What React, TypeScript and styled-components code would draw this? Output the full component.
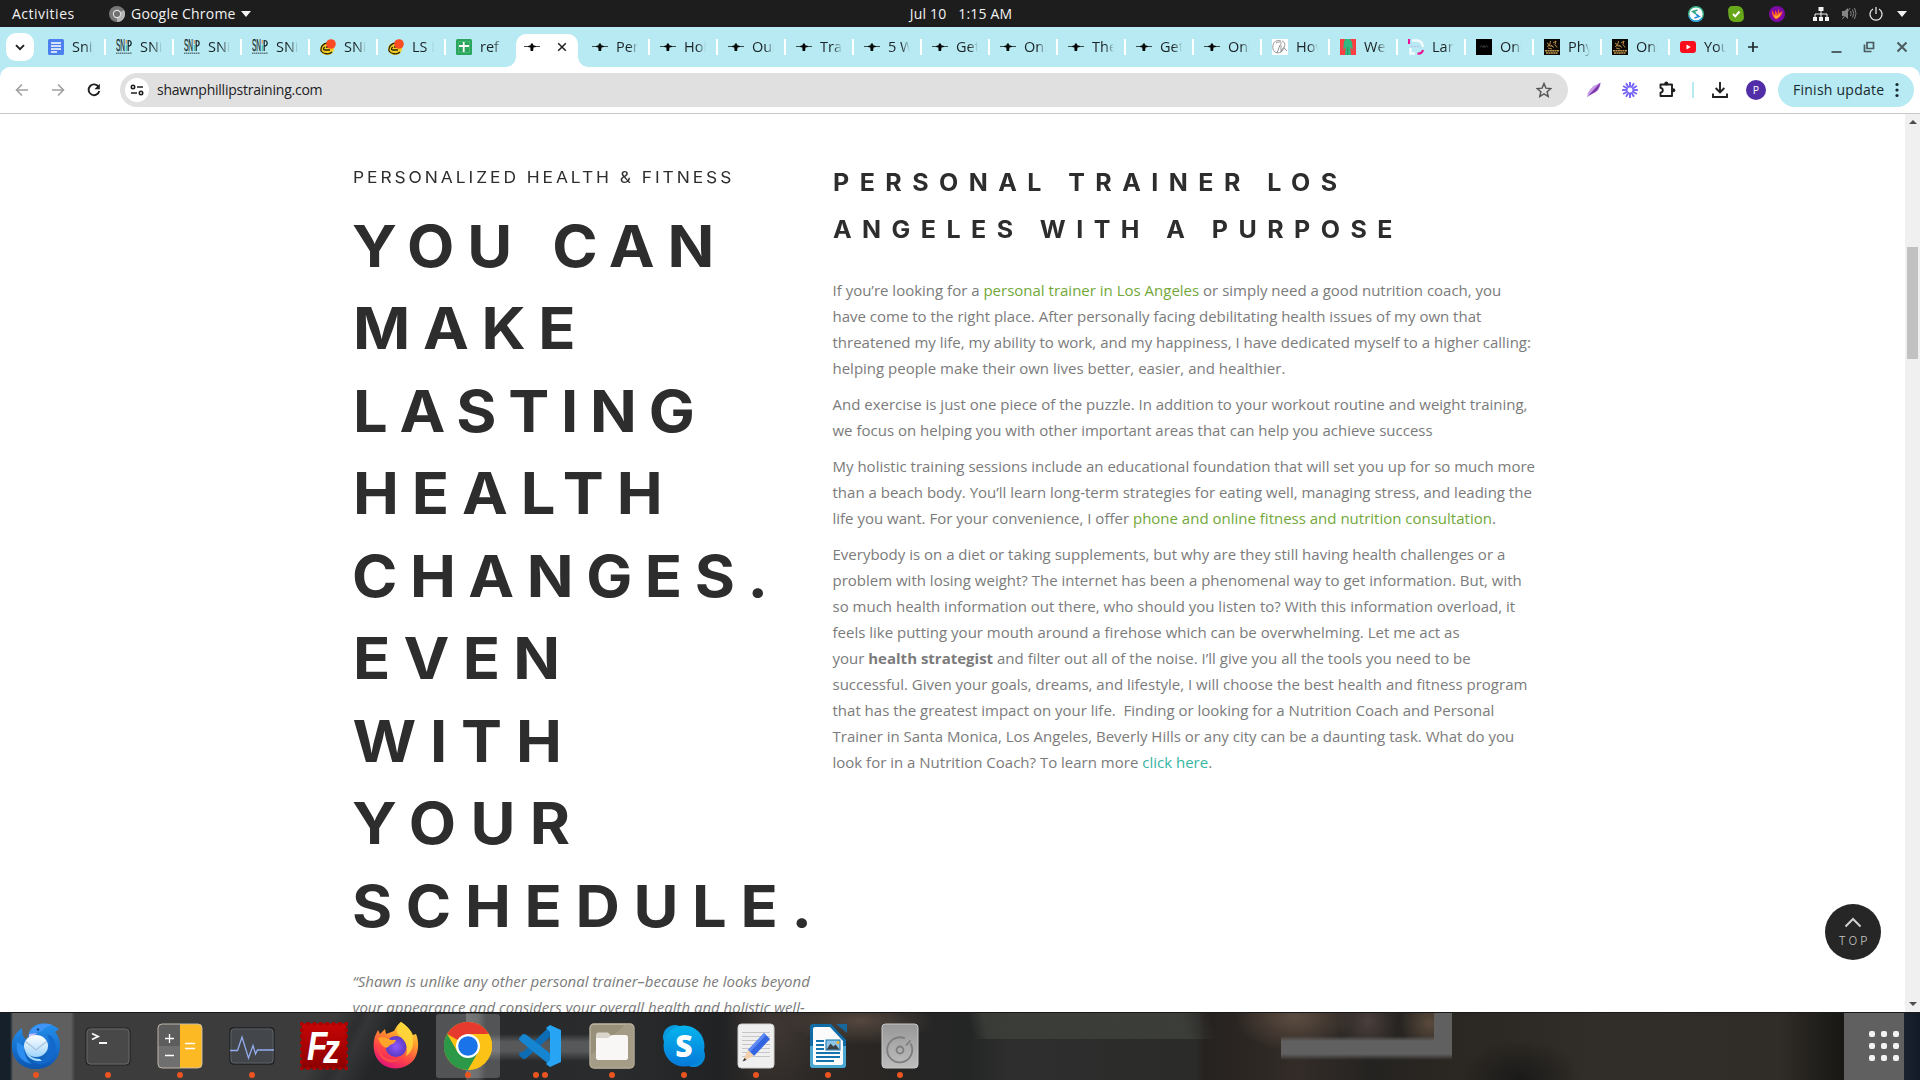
import React from "react";
import styled, { createGlobalStyle, css } from "styled-components";

const uiFont = `"Open Sans", "Noto Sans", sans-serif`;
const displayFont = `Inter, "Liberation Sans", sans-serif`;

const Global = createGlobalStyle`
  * { box-sizing: border-box; }
  html, body { margin: 0; padding: 0; overflow: hidden; background: #fff; }
  svg { display: block; flex: none; }
`;

const Desktop = styled.div`
  width: 1920px;
  height: 1080px;
  display: flex;
  flex-direction: column;
  overflow: hidden;
  font-family: ${uiFont};
`;

/* ---------- system top bar ---------- */

const SystemBar = styled.header`
  height: 27px;
  flex: none;
  display: grid;
  grid-template-columns: 1fr auto 1fr;
  align-items: center;
  padding: 0 13px 0 12px;
  background: #1d1d1d;
  color: #f2f2f2;
  font-size: 14px;
  line-height: 26px;
  white-space: pre;
`;

const SystemLeft = styled.div`
  display: flex;
  align-items: center;
`;

const Activities = styled.span`
  width: 97px;
  letter-spacing: 0.5px;
`;

const AppMenu = styled.span`
  margin-left: 6px;
  margin-right: 5px;
  letter-spacing: 0.2px;
`;

const Clock = styled.div`
  display: flex;
  gap: 12px;
  padding-left: 3px;
  letter-spacing: 0.15px;
`;

const Tray = styled.div`
  display: flex;
  justify-content: flex-end;
  align-items: center;
`;

const TraySlot = styled.span<{ $w: number }>`
  width: ${(p) => p.$w}px;
  display: flex;
  justify-content: center;
`;

/* ---------- browser tab strip ---------- */

const TabStrip = styled.nav`
  height: 40px;
  flex: none;
  display: flex;
  align-items: flex-start;
  padding-left: 6px;
  background: #b7eaf2;
`;

const TabSearch = styled.button`
  width: 28px;
  height: 28px;
  margin: 6px 4px 0 0;
  padding: 0;
  border: 0;
  border-radius: 10px;
  background: #fff;
  display: grid;
  place-items: center;
`;

const TabBox = styled.div<{ $active?: boolean; $divider?: boolean }>`
  position: relative;
  width: 68px;
  height: 40px;
  flex: none;
  display: flex;
  align-items: center;
  padding-left: 10px;
  padding-top: 0;

  ${(p) =>
    p.$divider &&
    css`
      &::after {
        content: "";
        width: 2px;
        height: 16px;
        margin-left: auto;
        background: #fff;
      }
    `}

  ${(p) =>
    p.$active &&
    css`
      height: 33px;
      width: 62px;
      margin: 7px 4px 0 2px;
      padding-left: 8px;
      padding-bottom: 7px;
      background: #fff;
      border-radius: 10px 10px 0 0;
      &::before,
      &::after {
        content: "";
        position: absolute;
        bottom: 0;
        width: 10px;
        height: 10px;
      }
      &::before {
        left: -10px;
        background: radial-gradient(circle at 0 0, transparent 9.5px, #fff 10px);
      }
      &::after {
        right: -10px;
        background: radial-gradient(circle at 100% 0, transparent 9.5px, #fff 10px);
      }
    `}
`;

const TabTitle = styled.span`
  width: 22px;
  margin-left: 8px;
  overflow: hidden;
  white-space: nowrap;
  font-size: 14.5px;
  line-height: 20px;
  color: #1b2326;
  mask-image: linear-gradient(90deg, #000 60%, transparent 100%);
`;

const TabClose = styled.span`
  margin-left: 17px;
`;

const NewTab = styled.span`
  margin: 14px 0 0 9px;
`;

const WindowControls = styled.div`
  margin-left: auto;
  height: 40px;
  display: flex;
  align-items: center;
  gap: 21px;
  padding-right: 12px;
`;

/* ---------- browser toolbar ---------- */

const ToolbarBack = styled.div`
  height: 47px;
  flex: none;
  background: linear-gradient(#b7eaf2 12px, #fff 12px);
`;

const Toolbar = styled.div`
  height: 47px;
  display: flex;
  align-items: center;
  padding: 0 6px 1px 14px;
  background: #fff;
  border-bottom: 1px solid #c8c9c9;
  border-radius: 10px 10px 0 0;
`;

const NavButtons = styled.div`
  display: flex;
  gap: 20px;
  width: 106px;
`;

const AddressBar = styled.div`
  width: 1448px;
  height: 34px;
  display: flex;
  align-items: center;
  padding: 0 16px 0 5px;
  border-radius: 17px;
  background: #e0e0e0;
`;

const SiteInfo = styled.span`
  width: 24px;
  height: 24px;
  border-radius: 50%;
  background: #fff;
  display: grid;
  place-items: center;
`;

const Url = styled.span`
  flex: 1;
  margin-left: 8px;
  font-size: 14px;
  letter-spacing: -0.23px;
  color: #202124;
`;

const Extensions = styled.div`
  display: flex;
  align-items: center;
  margin-left: 18px;
`;

const ExtensionSlot = styled.span<{ $w: number }>`
  width: ${(p) => p.$w}px;
  display: flex;
`;

const ToolbarRule = styled.i`
  width: 2px;
  height: 16px;
  background: #b7eaf2;
`;

const Avatar = styled.span`
  width: 20px;
  height: 20px;
  border-radius: 50%;
  background: #512da8;
  color: #fff;
  font-size: 10.5px;
  line-height: 20px;
  text-align: center;
`;

const UpdateButton = styled.button`
  margin-left: auto;
  width: 136px;
  height: 34px;
  border: 0;
  border-radius: 17px;
  background: #b7eaf2;
  display: flex;
  align-items: center;
  justify-content: space-between;
  padding: 0 15px;
  font: 14px ${uiFont};
  letter-spacing: 0.25px;
  color: #17292e;
`;

/* ---------- page ---------- */

const Viewport = styled.div`
  position: relative;
  height: 898px;
  flex: none;
  display: flex;
  background: #fff;
  overflow: hidden;
`;

const Page = styled.main`
  flex: 1;
  display: flex;
  padding-left: 352.5px;
  overflow: hidden;
`;

const LeftColumn = styled.section`
  width: 480px;
  flex: none;
  padding-top: 49px;
`;

const Eyebrow = styled.h4`
  margin: 0 0 13.5px;
  font: 400 16.4px/28px ${displayFont};
  letter-spacing: 2.77px;
  color: #2d2d2d;
  white-space: nowrap;
  transform: scaleX(1.06);
  transform-origin: 0 0;
`;

const Headline = styled.h1`
  margin: 0 0 20.5px;
  font: 700 58px/82.5px ${displayFont};
  color: #2d2d2d;
  transform: scaleX(1.06);
  transform-origin: 0 0;
`;

const HeadlineRow = styled.span<{ $spacing: number; $shift?: number }>`
  display: block;
  white-space: nowrap;
  letter-spacing: ${(p) => p.$spacing}px;
  text-indent: ${(p) => p.$shift ?? 0}px;
`;

const Quote = styled.p`
  margin: 0;
  font-size: 15px;
  line-height: 26px;
  font-style: italic;
  color: #7b7b7b;
  white-space: nowrap;
`;

const RightColumn = styled.section`
  width: 730px;
  flex: none;
  padding-top: 45px;
`;

const Subhead = styled.h2`
  margin: 0 0 24px;
  font: 700 23.6px/47px ${displayFont};
  letter-spacing: 9.85px;
  color: #2d2d2d;
  white-space: nowrap;
  transform: scaleX(1.06);
  transform-origin: 0 0;
`;

const Paragraph = styled.p`
  margin: 0 0 10px;
  font-size: 15px;
  line-height: 26px;
  color: #7b7b7b;
  white-space: nowrap;
`;

const TextLink = styled.a<{ $teal?: boolean }>`
  color: ${(p) => (p.$teal ? "#36b5a2" : "#72a83a")};
`;

const Scrollbar = styled.aside`
  width: 15px;
  flex: none;
  display: flex;
  flex-direction: column;
  align-items: center;
  padding: 6px 0;
  background: #f0f0f0;
`;

const ScrollThumb = styled.div`
  width: 11px;
  height: 112px;
  margin: 123px 0 auto;
  background: #c1c1c1;
`;

const ScrollArrow = styled.i<{ $down?: boolean }>`
  width: 0;
  height: 0;
  border: solid transparent;
  border-width: 0 4px 4px;
  border-bottom-color: #4d4d4d;
  transform: ${(p) => (p.$down ? "rotate(180deg)" : "none")};
`;

const TopButton = styled.a`
  position: absolute;
  left: 1825px;
  top: 790px;
  width: 56px;
  height: 56px;
  border-radius: 50%;
  background: #262626;
  display: flex;
  flex-direction: column;
  align-items: center;
  padding-top: 13px;
  color: #c4c4c4;
`;

const TopLabel = styled.span`
  margin: 6px 0 0 3px;
  font: 300 11.5px/14px ${displayFont};
  letter-spacing: 3.1px;
`;

/* ---------- dock ---------- */

const Dock = styled.footer`
  height: 68px;
  flex: none;
  display: flex;
  border-top: 1px solid #191919;
  background:
    linear-gradient(#606060, #606060) 1844px 0 / 60px 68px no-repeat,
    linear-gradient(90deg, #19212f, #131a27) 1904px 0 / 16px 68px no-repeat,
    linear-gradient(transparent, #606060 5px, #606060 18px, transparent) 1281px 23px / 171px 24px no-repeat,
    linear-gradient(#606060, #606060) 1434px 0 / 18px 30px no-repeat,
    linear-gradient(90deg, #555759, #4b4c4d 60%, transparent) 466px 0 / 20px 68px no-repeat,
    linear-gradient(transparent, #575859 8px, #575859 17px, transparent) 480px 21px / 132px 27px no-repeat,
    linear-gradient(90deg, #15202b 10px, #5f5f5f 13px, #5f5f5f 71px, #3c3c3c 75px) 0 0 / 300px 68px no-repeat,
    linear-gradient(118deg, #3c3c3c 22%, #2c2e2f 36%, #343536 42%, #242628 58%) 300px 0 / 136px 68px no-repeat,
    radial-gradient(ellipse 60px 34px at 1295px 4px, #5c4c40, transparent) 0 0 / 1434px 68px no-repeat,
    radial-gradient(ellipse 30px 36px at 1368px 8px, #4a3f3c, transparent) 0 0 / 1434px 68px no-repeat,
    radial-gradient(ellipse 30px 30px at 1430px 10px, #5a4a3c, transparent) 0 0 / 1434px 68px no-repeat,
    radial-gradient(ellipse 75px 24px at 860px 8px, #54473f, transparent),
    radial-gradient(ellipse 50px 60px at 775px 15px, #3f3733, transparent),
    linear-gradient(75deg, transparent 4px, rgba(70, 73, 66, 0.55) 18px, rgba(70, 73, 66, 0.6) 210px, transparent 238px) 970px 0 / 250px 26px no-repeat,
    radial-gradient(ellipse 60px 40px at 1520px 66px, #1a1a19, transparent),
    linear-gradient(90deg, #242628 0, #292b2c 620px, #202224 720px, #302c29 760px, #292623 870px,
      #262626 930px, #242525 970px, #2d2e2d 1010px, #2b2b2a 1195px, #26221f 1205px, #332c28 1300px,
      #252321 1370px, #2b2722 1460px, #312d28 1600px, #302c27 1780px, #191815 1840px);
`;

const DockItem = styled.div`
  width: 72px;
  height: 67px;
  display: flex;
  justify-content: center;
  padding-top: 1px;
`;

const DockTile = styled.div<{ $focused?: boolean }>`
  width: 64px;
  height: 64px;
  display: flex;
  flex-direction: column;
  align-items: center;
  padding-top: 8px;
  border-radius: 3px;
  background: ${(p) => (p.$focused ? "rgba(255,255,255,0.2)" : "transparent")};
`;

const RunningDots = styled.div`
  display: flex;
  gap: 3px;
  margin-top: 2px;
`;

const RunningDot = styled.i`
  width: 6px;
  height: 6px;
  border-radius: 50%;
  background: #e95420;
`;

const AppGrid = styled.div`
  margin: 18px 19px 0 auto;
  width: 32px;
  height: 32px;
  display: grid;
  grid-template-columns: repeat(3, 6px);
  grid-auto-rows: 6px;
  gap: 6px;
`;

const AppGridDot = styled.i`
  border-radius: 2px;
  background: #f2f2f2;
`;

/* ---------- favicons ---------- */

type Fav = "docs" | "snip" | "ls" | "sheets" | "plane" | "script" | "body" | "ring" | "black" | "gold" | "tube";

function Favicon({ kind }: { kind: Fav }) {
  return (
    <svg width="16" height="16" viewBox="0 0 16 16">
      {kind === "docs" && (
        <>
          <rect width="16" height="16" rx="1.5" fill="#4b80ee" />
          <path d="M3 4h10M3 7h10M3 10h10M3 13h6" stroke="#fff" strokeWidth="1.5" />
        </>
      )}
      {kind === "snip" && (
        <>
          <text x="0" y="12" fontSize="16.500" fontWeight="400" textLength="9" lengthAdjust="spacingAndGlyphs" fontFamily="Liberation Sans" stroke="#18282c" strokeWidth=".3" fill="#18282c">SN</text>
          <path d="M10.300 1v4" stroke="#e08a3c" />
          <path d="M10.300 6v6" stroke="#3fbf9c" />
          <path d="M12.200 12V1.500q3 0 3 2.800t-3 2.900" fill="none" stroke="#18282c" strokeWidth="1.200" />
          <path d="M0 14.300h16" stroke="#5c7a80" strokeWidth="1.500" strokeDasharray="1.500 .5" />
        </>
      )}
      {kind === "ls" && (
        <>
          <ellipse cx="7" cy="9.700" rx="7" ry="6.300" fill="#f5d020" />
          <path d="M8 4C3 4 .5 8 1 12c2 3 8 4 11 1M5 8c-2 1-2 3 0 3h5M6 8h4" fill="none" stroke="#2a2413" strokeWidth="1.300" />
          <circle cx="11" cy="5" r="4.800" fill="#fb4b22" />
        </>
      )}
      {kind === "sheets" && (
        <>
          <rect width="16" height="16" rx="1.500" fill="#29a65b" />
          <path d="M3 7h10M7.700 3v10" stroke="#fff" strokeWidth="1.800" />
          <path d="M2.500 2.500h11v11h-11z" fill="none" stroke="#5cc287" strokeWidth=".6" />
        </>
      )}
      {kind === "plane" && (
        <>
          <path d="M0 7.500h16" stroke="#3c484c" strokeWidth="1" />
          <path d="M4 7l2.500-.8L7 4.500h1.800l.5 1.700 2.700.8v1l-2.500.6-.4 3.400H6.600l-.3-3.400L4 8z" fill="#050708" />
        </>
      )}
      {kind === "script" && (
        <>
          <rect width="16" height="16" fill="#fff" />
          <path d="M9 2C3 0 0 5 1 10c1 5 8 5 10 1s3-8-1-9M4 4c4-2 7-1 4 2l-3 8M9 6v7c2-5 3-5 4-3l2 2" fill="none" stroke="#8b8d8e" strokeWidth=".9" />
        </>
      )}
      {kind === "body" && (
        <>
          <rect width="16" height="16" fill="#fb3f43" />
          <path d="M5 0h5l2 3 .8 8-2.600-3L11 16H5l.7-8-2.500 3L4 3z" fill="#2fb980" />
          <path d="M7.700 8v8" stroke="#1b8d62" strokeWidth=".7" />
        </>
      )}
      {kind === "ring" && (
        <>
          <path d="M4 1.500h5.500a5.500 5.500 0 0 1 5 6.500M2.500 9v5.500H7" fill="none" stroke="#f3fbfd" strokeWidth="2.500" />
          <path d="M1 0v5M9.500 14.500Q14 15 15 11" fill="none" stroke="#ec1199" strokeWidth="2.200" />
          <path d="M3 7.500h10" stroke="#b9c6e6" strokeWidth="1.500" strokeDasharray="2 1" />
        </>
      )}
      {kind === "black" && (
        <>
          <rect width="16" height="16" fill="#000" />
          <path d="M4 8.500l1.500-2L7 8.500l1-2 1 2 1.500-2 1.500 2" fill="none" stroke="#4e4e4e" strokeWidth=".7" />
        </>
      )}
      {kind === "gold" && (
        <>
          <rect width="16" height="16" fill="#0b0906" />
          <path d="M3 4l2 1.500L3.500 8M6.500 2l-1 5h3M9 4l3-2-1 3.500 2 3M7 6l3 2.500M4 9l4 1" fill="none" stroke="#b98d47" strokeWidth="1" />
          <path d="M1 11.700h14M2 14h12" stroke="#c49a50" strokeWidth="1.400" strokeDasharray="2 .4" />
        </>
      )}
      {kind === "tube" && (
        <>
          <rect y="2" width="16" height="12" rx="3" fill="#fb0d1b" />
          <path d="M6.500 5.500v5L10.800 8z" fill="#fff" />
        </>
      )}
    </svg>
  );
}

const tabs: { kind: Fav; title: string; active?: boolean; plain?: boolean }[] = [
  { kind: "docs", title: "Snip" },
  { kind: "snip", title: "SNiP" },
  { kind: "snip", title: "SNiP" },
  { kind: "snip", title: "SNiP" },
  { kind: "ls", title: "SNiP" },
  { kind: "ls", title: "LS I" },
  { kind: "sheets", title: "ref", plain: true },
  { kind: "plane", title: "", active: true },
  { kind: "plane", title: "Pers" },
  { kind: "plane", title: "Holi" },
  { kind: "plane", title: "Our" },
  { kind: "plane", title: "Trai" },
  { kind: "plane", title: "5 W" },
  { kind: "plane", title: "Get" },
  { kind: "plane", title: "Onl" },
  { kind: "plane", title: "The" },
  { kind: "plane", title: "Get" },
  { kind: "plane", title: "Onl" },
  { kind: "script", title: "How" },
  { kind: "body", title: "Wel" },
  { kind: "ring", title: "Larr" },
  { kind: "black", title: "Onl" },
  { kind: "gold", title: "Phy" },
  { kind: "gold", title: "Onl" },
  { kind: "tube", title: "You" },
];

/* ---------- dock icons ---------- */

const Thunderbird = () => (
  <svg width="48" height="48" viewBox="0 0 48 48">
    <defs>
      <linearGradient id="tb" x1="0" y1="0" x2="0" y2="1"><stop stopColor="#2490ee" /><stop offset="1" stopColor="#0b55b0" /></linearGradient>
      <linearGradient id="tbm" x1="0" y1="0" x2="0" y2="1"><stop stopColor="#fff" /><stop offset="1" stopColor="#9fd4fb" /></linearGradient>
    </defs>
    <path d="M10 6C2 12-1 19 0 27c1 12 11 20 24 20s24-9 24-23c0-6-2-11-5-14l4-3C38 0 25-1 18 8l-3 9C11 17 10 12 10 6z" fill="url(#tb)" />
    <path d="M17 11c4-8 14-11 24-8-6 1-9 3-11 6l-12 3z" fill="#3f95f5" />
    <path d="M17 12l9-1-9 5z" fill="#cbb9fb" />
    <path d="M35 12c5 9 4 20-5 26l-9 2 8 3c9-2 15-8 15-17 0-7-4-12-9-14z" fill="#1368cc" />
    <path d="M5 20c-2 12 4 20 15 22-6-4-8-10-8-18z" fill="#2c8df0" />
    <ellipse cx="24" cy="24" rx="12" ry="11" fill="url(#tbm)" />
    <path d="M13.500 19.500L24 28l10.500-8.500" fill="none" stroke="#a9c4d8" strokeWidth="1.300" />
    <path d="M13 28q5 9 15 9l2 2q-14 1-17-11z" fill="#a8dcfd" />
    <circle cx="26" cy="7.500" r="1.200" fill="#123d83" />
  </svg>
);

const Terminal = () => (
  <svg width="48" height="48" viewBox="0 0 48 48">
    <rect x="2" y="6" width="44" height="37" rx="4" fill="#484848" stroke="#202020" strokeWidth="1.200" />
    <rect x="3" y="7" width="42" height="35" rx="3.500" fill="none" stroke="#686868" />
    <path d="M8 11.500l6 3-6 3M15 21h8" fill="none" stroke="#f5f5f5" strokeWidth="1.900" />
  </svg>
);

const Calculator = () => (
  <svg width="48" height="48" viewBox="0 0 48 48">
    <rect x="2" y="2" width="44" height="44" rx="4" fill="#5d5d5d" />
    <path d="M2 24h22v22H6a4 4 0 0 1-4-4z" fill="#6f6f6f" />
    <path d="M24 2h18a4 4 0 0 1 4 4v36a4 4 0 0 1-4 4H24z" fill="#fcb924" />
    <rect x="2" y="2" width="44" height="44" rx="4" fill="none" stroke="#c9c2b2" strokeWidth=".9" />
    <path d="M9 16.500h9M13.500 12v9M9 33.500h9M29 21.500h10M29 26.500h10" stroke="#fff" strokeWidth="1.300" />
  </svg>
);

const Monitor = () => (
  <svg width="48" height="48" viewBox="0 0 48 48">
    <rect x="2" y="6" width="44" height="36" rx="3" fill="#43474c" stroke="#1f2022" strokeWidth="1.300" />
    <rect x="3" y="7" width="42" height="34" rx="3" fill="none" stroke="#5d6064" />
    <path d="M2 28.500h7.500L14 15l6.500 21L25 23.500l2.500 8.500 2-4H46" fill="none" stroke="#93adee" strokeWidth="1.300" />
  </svg>
);

const FileZilla = () => (
  <svg width="48" height="48" viewBox="0 0 48 48">
    <defs><linearGradient id="fz" x1="0" y1="0" x2="0" y2="1"><stop stopColor="#c60505" /><stop offset="1" stopColor="#8c0000" /></linearGradient></defs>
    <rect x="1.500" y="1.500" width="45" height="45" fill="url(#fz)" />
    <rect x="1.500" y="1.500" width="45" height="45" fill="none" stroke="#a80202" strokeWidth="4" strokeLinecap="round" strokeDasharray="0 6.430" />
    <text x="7" y="37.500" fontFamily="Liberation Sans" fontStyle="italic" fontWeight="700" fontSize="41" textLength="33" lengthAdjust="spacingAndGlyphs" fill="#fff">F<tspan dx="-5" dy="3">z</tspan></text>
  </svg>
);

const Firefox = () => (
  <svg width="48" height="48" viewBox="0 0 48 48">
    <defs>
      <linearGradient id="ff" x1=".8" y1="0" x2=".3" y2="1"><stop stopColor="#ffe94a" /><stop offset=".35" stopColor="#ff9a2b" /><stop offset=".7" stopColor="#ff4447" /><stop offset="1" stopColor="#e0127c" /></linearGradient>
      <radialGradient id="ffg"><stop stopColor="#9059ff" /><stop offset="1" stopColor="#5b3ac0" /></radialGradient>
    </defs>
    <path d="M29 0c6 4 10 8 12 13l3-1c3 7 3 17-1 24-8 13-28 14-37 2C0 30 1 18 4 12l2-4 2 4 5-5 1 5 8-3c2-4 4-7 7-9z" fill="url(#ff)" />
    <circle cx="24" cy="24.500" r="10.500" fill="url(#ffg)" />
    <path d="M29 0c8 5 13 12 12 22-1 7-4 10-7 12 3-10-1-16-7-20-3-4-3-9 2-14z" fill="#ffd93b" opacity=".85" />
    <path d="M6 16c5-2 9 0 13 2h5c-1 4-5 4-7 6-3 4-8 0-11-8z" fill="#ffa329" />
    <path d="M6 23c1 12 12 18 23 13-9 9-24 3-23-13z" fill="#ff5b3a" opacity=".7" />
  </svg>
);

const Chrome = () => (
  <svg width="48" height="48" viewBox="0 0 48 48">
    <circle cx="24" cy="24" r="24" fill="#fcc215" />
    <path d="M24 24L3.200 12A24 24 0 0 1 44.800 12z" fill="#e53a2d" />
    <path d="M3.200 12A24 24 0 0 0 24 48l10.400-18L24 24 13.600 30z" fill="#2b9948" />
    <path d="M24 12h20.800A24 24 0 0 1 24 48l10.400-18z" fill="#fcc215" />
    <circle cx="24" cy="24" r="12" fill="#fff" />
    <circle cx="24" cy="24" r="9.800" fill="#1a73e8" />
  </svg>
);

const VsCode = () => (
  <svg width="48" height="48" viewBox="0 0 48 48">
    <path d="M34 4L8 29l-5 2v2l4 4 3-.5L34 15z" fill="#0e6cb5" />
    <path d="M3 16l4-4 3 .5L35 32v12L3 18z" fill="#1585d2" />
    <path d="M34 3l11 5v32l-11 5-4-3 4-4V10l-4-4z" fill="#27a5f4" />
  </svg>
);

const Files = () => (
  <svg width="48" height="48" viewBox="0 0 48 48">
    <rect x="2" y="2" width="44" height="44" rx="4" fill="#989079" stroke="#c1b9a5" strokeWidth="1.300" />
    <path d="M2 34L38 2h4a4 4 0 0 1 4 4v36a4 4 0 0 1-4 4H6a4 4 0 0 1-4-4z" fill="#aaa18d" opacity=".7" />
    <path d="M8 13a2.500 2.500 0 0 1 2.500-2.500H20l4 4v5H8z" fill="#d9d5cb" />
    <path d="M8 16h12l4-3h13.500a2.500 2.500 0 0 1 2.500 2.500v20a2.500 2.500 0 0 1-2.500 2.500h-27A2.500 2.500 0 0 1 8 35.500z" fill="#f8f7f5" />
  </svg>
);

const Skype = () => (
  <svg width="48" height="48" viewBox="0 0 48 48">
    <defs><linearGradient id="sk" x1="0" y1="0" x2="0" y2="1"><stop stopColor="#05b5ee" /><stop offset="1" stopColor="#0679da" /></linearGradient></defs>
    <circle cx="15" cy="15" r="12" fill="#0a9ade" />
    <circle cx="33.500" cy="33.500" r="11.500" fill="#0589d8" />
    <circle cx="24" cy="24" r="20.500" fill="url(#sk)" />
    <text x="24" y="35" textAnchor="middle" fontFamily="Open Sans" fontWeight="800" fontSize="30" fill="#fff">S</text>
  </svg>
);

const Gedit = () => (
  <svg width="48" height="48" viewBox="0 0 48 48">
    <rect x="6" y="2" width="36" height="44" rx="3.500" fill="#efefef" stroke="#cfcfcf" />
    <path d="M10 10.500h28M10 14.500h28M10 18.500h28M10 22.500h28M10 26.500h28M10 30.500h28M10 34.500h28" stroke="#c6c6c6" />
    <path d="M16 28L32 11l6 6-16 17z" fill="#3465e0" />
    <path d="M16 28L32 11l2 2-16 17z" fill="#5f8bf5" />
    <path d="M16 28l6 6-11 5z" fill="#f4cfab" />
    <path d="M12.500 36l2 2-4 1.500z" fill="#333" />
  </svg>
);

const Writer = () => (
  <svg width="48" height="48" viewBox="0 0 48 48">
    <path d="M9 2h18l15 16v25a3 3 0 0 1-3 3H9a3 3 0 0 1-3-3V5a3 3 0 0 1 3-3z" fill="#0f6ca6" />
    <path d="M6 24h36v19a3 3 0 0 1-3 3H9a3 3 0 0 1-3-3z" fill="#4ba8d3" />
    <path d="M32 2h11v9z" fill="#17669c" />
    <path d="M11 5h15l13 14v22a2 2 0 0 1-2 2H11a2 2 0 0 1-2-2V7a2 2 0 0 1 2-2z" fill="#fbfbfb" />
    <path d="M12 19h8M12 23h8M12 27h8M12 31h24M12 35h24M12 39h18" stroke="#1373ae" strokeWidth="1.900" />
    <rect x="22" y="18" width="14" height="10" fill="#8fc4e4" stroke="#1373ae" />
    <path d="M22.500 27.500l4-6 3 3 2-2 4 5z" fill="#3b4044" />
    <circle cx="34" cy="20.500" r="1.500" fill="#f4b62c" />
  </svg>
);

const Disks = () => (
  <svg width="48" height="48" viewBox="0 0 48 48">
    <defs><linearGradient id="dk" x1="0" y1="0" x2="0" y2="1"><stop stopColor="#989898" /><stop offset="1" stopColor="#bdbdbd" /></linearGradient></defs>
    <rect x="6" y="2" width="36" height="44" rx="3.500" fill="url(#dk)" stroke="#cacaca" />
    <path d="M34.500 21.500A12.500 12.500 0 1 1 29 16.500" fill="none" stroke="#7d7d7d" strokeWidth="1.800" />
    <path d="M30 23.500l4.500-5" stroke="#7d7d7d" strokeWidth="1.800" />
    <circle cx="24" cy="28" r="3.500" fill="none" stroke="#7d7d7d" strokeWidth="1.800" />
  </svg>
);

const dockItems: { Icon: React.FC; dots: number; focused?: boolean }[] = [
  { Icon: Thunderbird, dots: 1 },
  { Icon: Terminal, dots: 1 },
  { Icon: Calculator, dots: 1 },
  { Icon: Monitor, dots: 1 },
  { Icon: FileZilla, dots: 0 },
  { Icon: Firefox, dots: 0 },
  { Icon: Chrome, dots: 1, focused: true },
  { Icon: VsCode, dots: 2 },
  { Icon: Files, dots: 1 },
  { Icon: Skype, dots: 1 },
  { Icon: Gedit, dots: 1 },
  { Icon: Writer, dots: 1 },
  { Icon: Disks, dots: 1 },
];

const headline: [string, number, number][] = [
  ["YOU CAN", 12.05, -1],
  ["MAKE", 11.9, 0],
  ["LASTING", 11.1, 0],
  ["HEALTH", 12.15, 0],
  ["CHANGES.", 11.8, -1],
  ["EVEN", 12.5, 0],
  ["WITH", 13, -0.5],
  ["YOUR", 13.6, -1],
  ["SCHEDULE.", 12.85, -1],
];

export default function App() {
  return (
    <Desktop>
      <Global />
      <SystemBar>
        <SystemLeft>
          <Activities>Activities</Activities>
          <svg width="16" height="16" viewBox="0 0 16 16">
            <circle cx="8" cy="8" r="8" fill="#777" />
            <path d="M8 8L15 4A8 8 0 0 1 8 16z" fill="#b5b5b5" />
            <circle cx="8" cy="8" r="4.200" fill="#dedede" />
            <circle cx="8" cy="8" r="3" fill="#6e6e6e" />
          </svg>
          <AppMenu>Google Chrome</AppMenu>
          <svg width="10" height="6" viewBox="0 0 10 6"><path d="M0 0h10L5 6z" fill="#f2f2f2" /></svg>
        </SystemLeft>
        <Clock><span>Jul 10</span><span>1:15 AM</span></Clock>
        <Tray>
          <TraySlot $w={40}>
            <svg width="16" height="16" viewBox="0 0 16 16">
              <circle cx="8" cy="8" r="7.300" fill="#fff" stroke="#35b284" strokeWidth="1.400" />
              <path d="M1 10a7.300 7.300 0 0 0 13 2" fill="none" stroke="#2d9be0" strokeWidth="1.400" />
              <path d="M9.500 4L5 5.500l3 2.200" fill="none" stroke="#2ba57c" strokeWidth="1.800" />
              <path d="M6.500 12l4.500-1.500-3-2.200" fill="none" stroke="#2d8fd6" strokeWidth="1.800" />
            </svg>
          </TraySlot>
          <TraySlot $w={40}>
            <svg width="16" height="16" viewBox="0 0 16 16">
              <path d="M4 0h6q5 1 5.500 6l.5 6q-1 4-5 4H6q-5-1-5.500-6L0 4q1-4 4-4z" fill="#67a81a" />
              <path d="M5 8l2.300 2.300L11.500 5.500" fill="none" stroke="#fff" strokeWidth="1.900" />
            </svg>
          </TraySlot>
          <TraySlot $w={42}>
            <svg width="16" height="16" viewBox="0 0 16 16">
              <circle cx="8" cy="8" r="8" fill="#7d0aa4" />
              <path d="M3 4l3 5V4l2.500 4L9.500 2.500l1 4.500L13.500 5Q13 11 7 13.500 2.500 11 3 4z" fill="#ff5a2a" />
              <path d="M5 9l3 1 4-3q-1 4-5 5.500Q5 11.500 5 9z" fill="#ffb02c" />
            </svg>
          </TraySlot>
          <TraySlot $w={45}>
            <svg width="16" height="14" viewBox="0 0 16 14" fill="#f2f2f2">
              <path d="M5.500 0h5v4h-5zM0 10h4v4H0zM6 10h4v4H6zM12 10h4v4h-4z" />
              <path d="M8 4v6M2 10V7h12v3" fill="none" stroke="#f2f2f2" />
            </svg>
          </TraySlot>
          <TraySlot $w={12}>
            <svg width="16" height="15" viewBox="0 0 16 15">
              <path d="M1 5h2.500L7 2v11L3.500 10H1z" fill="#858585" />
              <path d="M1.500 13L9 2M9.500 5q1.500 2.500 0 5M11.500 3.500q2.500 4 0 8M13.500 2q3 5.500 0 11" fill="none" stroke="#858585" />
            </svg>
          </TraySlot>
          <TraySlot $w={42}>
            <svg width="14" height="14" viewBox="0 0 14 14">
              <path d="M4 2a6 6 0 1 0 6 0M7 0v7" fill="none" stroke="#f2f2f2" strokeWidth="1.200" />
            </svg>
          </TraySlot>
          <TraySlot $w={10}>
            <svg width="10" height="6" viewBox="0 0 10 6"><path d="M0 0h10L5 6z" fill="#f2f2f2" /></svg>
          </TraySlot>
        </Tray>
      </SystemBar>

      <TabStrip>
        <TabSearch>
          <svg width="10" height="7" viewBox="0 0 10 7"><path d="M1 1.200l4 4 4-4" fill="none" stroke="#1f1f1f" strokeWidth="1.900" /></svg>
        </TabSearch>
        {tabs.map((t, i) => (
          <TabBox key={i} $active={t.active} $divider={!t.active && !t.plain}>
            <Favicon kind={t.kind} />
            {t.active ? (
              <TabClose>
                <svg width="10" height="10" viewBox="0 0 10 10"><path d="M1.200 1.200l7.600 7.600M8.800 1.200L1.200 8.800" stroke="#1f1f1f" strokeWidth="1.500" /></svg>
              </TabClose>
            ) : (
              <TabTitle>{t.title}</TabTitle>
            )}
          </TabBox>
        ))}
        <NewTab>
          <svg width="12" height="12" viewBox="0 0 12 12"><path d="M6 1v10M1 6h10" stroke="#1f2a2d" strokeWidth="1.700" /></svg>
        </NewTab>
        <WindowControls>
          <svg width="11" height="11" viewBox="0 0 11 11"><path d="M0.500 10h10" stroke="#4c5b5f" strokeWidth="1.900" /></svg>
          <svg width="12" height="12" viewBox="0 0 12 12">
            <path d="M4 1.500h6.500V7.500H4zM1.500 3.500v7H8.500" fill="none" stroke="#4c5b5f" strokeWidth="1.700" />
          </svg>
          <svg width="12" height="12" viewBox="0 0 12 12"><path d="M1.500 1.500l9 9M10.500 1.500l-9 9" stroke="#4c5b5f" strokeWidth="2" /></svg>
        </WindowControls>
      </TabStrip>

      <ToolbarBack>
        <Toolbar>
          <NavButtons>
            <svg width="16" height="16" viewBox="0 0 16 16"><path d="M14 8H2.500M8 2.500L2.500 8 8 13.500" fill="none" stroke="#a0a0a0" strokeWidth="1.600" /></svg>
            <svg width="16" height="16" viewBox="0 0 16 16"><path d="M2 8h11.500M8 2.500L13.500 8 8 13.500" fill="none" stroke="#a0a0a0" strokeWidth="1.600" /></svg>
            <svg width="16" height="16" viewBox="0 0 16 16">
              <path d="M12.700 5A5.400 5.400 0 1 0 13.300 9" fill="none" stroke="#1f1f1f" strokeWidth="1.900" />
              <path d="M13.800 1.800v5.400H8.400z" fill="#1f1f1f" />
            </svg>
          </NavButtons>
          <AddressBar>
            <SiteInfo>
              <svg width="14" height="12" viewBox="0 0 14 12" fill="none" stroke="#1f1f1f" strokeWidth="1.600">
                <circle cx="3" cy="3" r="1.700" /><path d="M7 3h6M1 9h6" /><circle cx="11" cy="9" r="1.700" />
              </svg>
            </SiteInfo>
            <Url>shawnphillipstraining.com</Url>
            <svg width="16" height="16" viewBox="0 0 16 16">
              <path d="M8 1.500l1.900 4.600 4.900.4-3.700 3.200 1.100 4.800L8 11.900l-4.200 2.600 1.100-4.800L1.200 6.500l4.900-.4z" fill="none" stroke="#545454" strokeWidth="1.400" />
            </svg>
          </AddressBar>
          <Extensions>
            <ExtensionSlot $w={36}>
              <svg width="16" height="16" viewBox="0 0 16 16">
                <path d="M1 15.500Q1 6 14.500.5q.5 8.500-9 12L2.500 13z" fill="#c79be6" />
                <path d="M.8 15.200L14.500.5Q13 9 5.500 12z" fill="#7a35ab" />
              </svg>
            </ExtensionSlot>
            <ExtensionSlot $w={36}>
              <svg width="16" height="16" viewBox="-8 -8 16 16">
                {Array.from({ length: 12 }, (_, i) => (
                  <path key={i} d="M0-2.500V-7.900" transform={`rotate(${i * 30})`} stroke="#7563f7" strokeWidth="1.900" />
                ))}
              </svg>
            </ExtensionSlot>
            <ExtensionSlot $w={34}>
              <svg width="18" height="18" viewBox="0 0 18 18">
                <path d="M2.500 3.500h11.500v11.500H2.500v-3.300q2.300-.3 2.300-2.400T2.500 6.800z" fill="none" stroke="#1f1f1f" strokeWidth="1.900" strokeLinejoin="round" />
                <circle cx="8.300" cy="2.500" r="2" fill="#1f1f1f" /><circle cx="15.300" cy="9.300" r="2" fill="#1f1f1f" />
              </svg>
            </ExtensionSlot>
            <ExtensionSlot $w={20}><ToolbarRule /></ExtensionSlot>
            <ExtensionSlot $w={34}>
              <svg width="16" height="16" viewBox="0 0 16 16">
                <path d="M8 0v10M3.700 6L8 10.300 12.300 6M1 11.500V15h14v-3.500" fill="none" stroke="#1f1f1f" strokeWidth="1.900" />
              </svg>
            </ExtensionSlot>
            <Avatar>P</Avatar>
          </Extensions>
          <UpdateButton>
            Finish update
            <svg width="4" height="16" viewBox="0 0 4 16" fill="#17292e"><circle cx="2" cy="2.500" r="1.600" /><circle cx="2" cy="8" r="1.600" /><circle cx="2" cy="13.500" r="1.600" /></svg>
          </UpdateButton>
        </Toolbar>
      </ToolbarBack>

      <Viewport>
        <Page>
          <LeftColumn>
            <Eyebrow>PERSONALIZED HEALTH &amp; FITNESS</Eyebrow>
            <Headline>
              {headline.map(([text, spacing, shift]) => (
                <HeadlineRow key={text} $spacing={spacing} $shift={shift}>{text}</HeadlineRow>
              ))}
            </Headline>
            <Quote>
              “Shawn is unlike any other personal trainer–because he looks beyond<br />
              your appearance and considers your overall health and holistic well-
            </Quote>
          </LeftColumn>
          <RightColumn>
            <Subhead>PERSONAL TRAINER LOS<br />ANGELES WITH A PURPOSE</Subhead>
            <Paragraph>
              If you’re looking for a <TextLink>personal trainer in Los Angeles</TextLink> or simply need a good nutrition coach, you<br />
              have come to the right place. After personally facing debilitating health issues of my own that<br />
              threatened my life, my ability to work, and my happiness, I have dedicated myself to a higher calling:<br />
              helping people make their own lives better, easier, and healthier.
            </Paragraph>
            <Paragraph>
              And exercise is just one piece of the puzzle. In addition to your workout routine and weight training,<br />
              we focus on helping you with other important areas that can help you achieve success
            </Paragraph>
            <Paragraph>
              My holistic training sessions include an educational foundation that will set you up for so much more<br />
              than a beach body. You’ll learn long-term strategies for eating well, managing stress, and leading the<br />
              life you want. For your convenience, I offer <TextLink>phone and online fitness and nutrition consultation</TextLink>.
            </Paragraph>
            <Paragraph>
              Everybody is on a diet or taking supplements, but why are they still having health challenges or a<br />
              problem with losing weight? The internet has been a phenomenal way to get information. But, with<br />
              so much health information out there, who should you listen to? With this information overload, it<br />
              feels like putting your mouth around a firehose which can be overwhelming. Let me act as<br />
              your <b>health strategist</b> and filter out all of the noise. I’ll give you all the tools you need to be<br />
              successful. Given your goals, dreams, and lifestyle, I will choose the best health and fitness program<br />
              that has the greatest impact on your life.&nbsp; Finding or looking for a Nutrition Coach and Personal<br />
              Trainer in Santa Monica, Los Angeles, Beverly Hills or any city can be a daunting task. What do you<br />
              look for in a Nutrition Coach? To learn more <TextLink $teal>click here</TextLink>.
            </Paragraph>
          </RightColumn>
        </Page>
        <Scrollbar>
          <ScrollArrow />
          <ScrollThumb />
          <ScrollArrow $down />
        </Scrollbar>
        <TopButton>
          <svg width="18" height="11" viewBox="0 0 18 11"><path d="M1.500 9.500L9 2l7.500 7.500" fill="none" stroke="#d0d0d0" strokeWidth="2" /></svg>
          <TopLabel>TOP</TopLabel>
        </TopButton>
      </Viewport>

      <Dock>
        {dockItems.map(({ Icon, dots, focused }, i) => (
          <DockItem key={i}>
            <DockTile $focused={focused}>
              <Icon />
              <RunningDots>
                {Array.from({ length: dots }, (_, d) => <RunningDot key={d} />)}
              </RunningDots>
            </DockTile>
          </DockItem>
        ))}
        <AppGrid>
          {Array.from({ length: 9 }, (_, i) => <AppGridDot key={i} />)}
        </AppGrid>
      </Dock>
    </Desktop>
  );
}
